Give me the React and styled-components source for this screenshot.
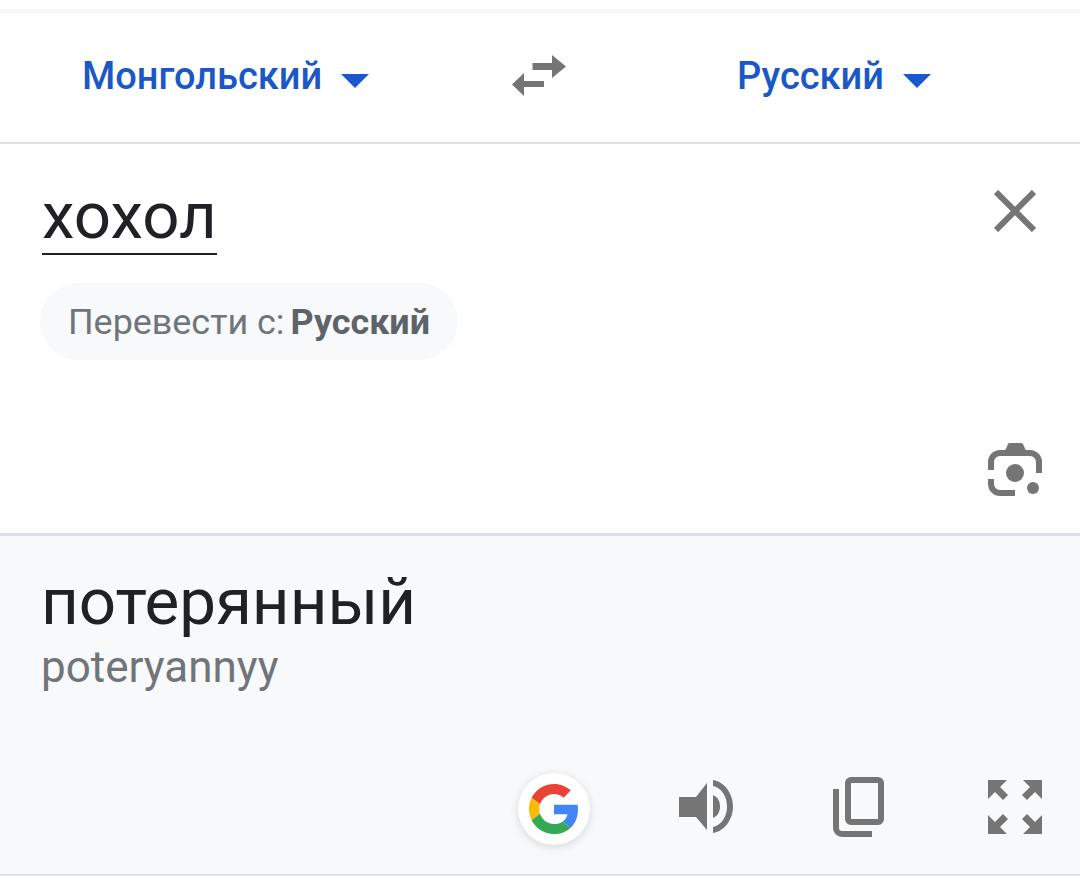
import React from "react";
import styled, { createGlobalStyle } from "styled-components";

const Global = createGlobalStyle`
  html, body { margin: 0; padding: 0; background: #fff; }
  body { font-family: Roboto, "Noto Sans", sans-serif; width: 1080px; height: 884px; overflow: hidden; }
`;
const Page = styled.div`
  width: 1080px; height: 884px; display: flex; flex-direction: column; background: #fff;
`;
const TopEdge = styled.div`
  height: 4px; margin-top: 9px; background: #f7f7f7; flex: none;
`;
const LangBar = styled.header`
  height: 129px; flex: none; display: grid; grid-template-columns: 512px 54px 1fr; align-items: center;
  border-bottom: 2px solid #e0e1e3;
`;
const LangButton = styled.div`
  display: flex; align-items: center; gap: 19px; padding-left: ${p => p.$left}px;
  font-size: 38px; font-weight: 500; color: #1a58c5; margin-top: -4px;
`;
const Caret = styled.span`
  width: 0; height: 0; border-left: 14px solid transparent; border-right: 14px solid transparent;
  border-top: 14px solid #1a58d0; margin-top: 11px;
`;
const SwapIcon = styled.svg`
  width: 54px; height: 41px; display: block; fill: #757575; margin-top: -4px;
`;
const Source = styled.section`
  flex: none; padding: 0 38px 0 42px; display: flex; flex-direction: column; box-sizing: border-box;
  border-bottom: 3px solid #dcdfe8; height: 392px;
`;
const InputRow = styled.div`
  display: flex; justify-content: space-between; align-items: flex-start; padding-top: 37px;
`;
const SourceWord = styled.span`
  font-size: 65.4px; line-height: 70px; color: #202124; display: block; height: 72px;
  border-bottom: 2px solid #202124;
`;
const CloseIcon = styled.svg`
  width: 42px; height: 42px; display: block; stroke: #757575; stroke-width: 6; fill: none;
  margin: 9px 6px 0 0;
`;
const Chip = styled.div`
  align-self: flex-start; margin: 28px 0 0 -2px; height: 77px; padding: 0 28px; border-radius: 38.5px; background: #f7f9fb;
  display: flex; align-items: center; font-size: 35.9px; color: #70757a; white-space: nowrap;
`;
const ChipStrong = styled.strong`
  font-weight: 700; color: #5f6368; margin-left: 6px;
`;
const CameraWrap = styled.div`
  margin-top: auto; padding-bottom: 36px; display: flex; justify-content: flex-end;
`;
const Icon = styled.svg`
  display: block; flex: none; fill: #757575;
`;
const Result = styled.section`
  flex: none; height: 340px; box-sizing: border-box; background: #f8f9fb; border-bottom: 2px solid #e0e1e3;
  padding: 28px 38px 0 41px; display: flex; flex-direction: column;
`;
const Translation = styled.div`
  font-size: 65.5px; line-height: 76px; color: #202124;
`;
const Translit = styled.div`
  font-size: 44px; line-height: 50px; color: #70757a; margin-top: 2px;
`;
const Actions = styled.div`
  margin-top: auto; height: 72px; margin-bottom: 29px; display: flex; align-items: center; justify-content: flex-end;
  margin-right: -9px;
`;
const Slot = styled.div`
  width: 72px; height: 72px; margin-left: ${p => p.$gap}px; display: flex; align-items: center; justify-content: center;
  padding-bottom: 5px; box-sizing: border-box;
`;
const GoogleButton = styled.div`
  width: 72px; height: 72px; display: flex; align-items: center; justify-content: center;
  background: #fff; border-radius: 50%; box-shadow: 0 2px 8px rgba(60,64,67,.18);
`;

export default function App() {
  return (
    <Page>
      <Global />
      <TopEdge />
      <LangBar>
        <LangButton $left={82}>Монгольский<Caret /></LangButton>
        <SwapIcon viewBox="0 0 54 41">
          <polygon points="20.5,8 40,8 40,0 54,11.5 40,23 40,15 20.5,15" />
          <polygon points="12,18 12,26 32,26 32,32 12,32 12,41 0,29.5" />
        </SwapIcon>
        <LangButton $left={171}>Русский<Caret /></LangButton>
      </LangBar>
      <Source>
        <InputRow>
          <SourceWord>хохол</SourceWord>
          <CloseIcon viewBox="0 0 42 42"><path d="M2 2 40 40M40 2 2 40" /></CloseIcon>
        </InputRow>
        <Chip>Перевести с:<ChipStrong>Русский</ChipStrong></Chip>
        <CameraWrap>
          <Icon width="54" height="54" viewBox="0 0 54 54">
            <path d="M3 27V19a9 9 0 0 1 9-9H42a9 9 0 0 1 9 9V30M3 36V41a9 9 0 0 0 9 9H27" fill="none" stroke="#757575" strokeWidth="6" />
            <path d="M16 10 20 1Q20.5 0 22 0H33Q34.5 0 35 1L39 10Z" />
            <circle cx="27" cy="30" r="9" />
            <circle cx="45" cy="45" r="6" />
          </Icon>
        </CameraWrap>
      </Source>
      <Result>
        <Translation>потерянный</Translation>
        <Translit>poteryannyy</Translit>
        <Actions>
          <GoogleButton>
            <svg width="50" height="50" viewBox="0 0 48 48">
              <path fill="#EA4335" d="M24 9.5c3.54 0 6.71 1.22 9.21 3.6l6.85-6.85C35.9 2.38 30.47 0 24 0 14.62 0 6.51 5.38 2.56 13.22l7.98 6.19C12.43 13.72 17.74 9.5 24 9.5z" />
              <path fill="#4285F4" d="M46.98 24.55c0-1.57-.15-3.09-.38-4.55H24v9.02h12.94c-.58 2.96-2.26 5.48-4.78 7.18l7.73 6c4.51-4.18 7.09-10.36 7.09-17.65z" />
              <path fill="#FBBC05" d="M10.53 28.59c-.48-1.45-.76-2.99-.76-4.59s.27-3.14.76-4.59l-7.98-6.19C.92 16.46 0 20.12 0 24c0 3.88.92 7.54 2.56 10.78l7.97-6.19z" />
              <path fill="#34A853" d="M24 48c6.48 0 11.93-2.13 15.89-5.81l-7.73-6c-2.15 1.45-4.92 2.3-8.16 2.3-6.26 0-11.57-4.22-13.47-9.91l-7.98 6.19C6.51 42.62 14.62 48 24 48z" />
            </svg>
          </GoogleButton>
          <Slot $gap={80}>
            <Icon width="55" height="54" viewBox="0 0 55 54">
              <path d="M0 17H17L28 3V50L17 37H0Z" />
              <path d="M34 15C39 17 41 22 41 26.5S39 36 34 38Z" />
              <path d="M34 0C46 2 54 14 54 26.5S46 51 34 53V47C43 45 48 36 48 26.5S43 8 34 6Z" />
            </Icon>
          </Slot>
          <Slot $gap={81}>
            <Icon width="52" height="60" viewBox="0 0 52 60">
              <rect x="15" y="3" width="33" height="42" rx="3" fill="none" stroke="#757575" strokeWidth="6" />
              <path d="M3 12V51a6 6 0 0 0 6 6H39" fill="none" stroke="#757575" strokeWidth="6" />
            </Icon>
          </Slot>
          <Slot $gap={84}>
            <Icon width="54" height="54" viewBox="0 0 54 54">
              <polygon points="0,0 19,0 12,7 20,15 15,20 7,12 0,19" />
              <polygon points="54,0 35,0 42,7 34,15 39,20 47,12 54,19" />
              <polygon points="0,54 19,54 12,47 20,39 15,34 7,42 0,35" />
              <polygon points="54,54 35,54 42,47 34,39 39,34 47,42 54,35" />
            </Icon>
          </Slot>
        </Actions>
      </Result>
    </Page>
  );
}
